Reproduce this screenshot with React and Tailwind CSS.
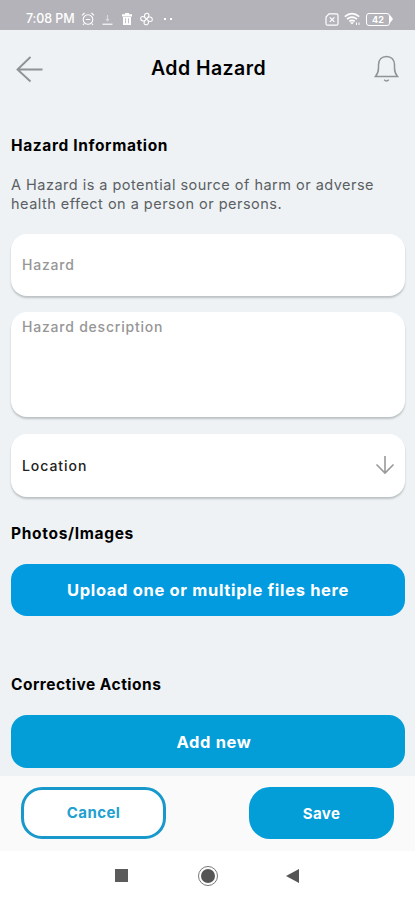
const StatusBar = () => (
  <header className="flex h-[30px] shrink-0 items-start justify-between bg-[#b4b3b9] pt-[12px] pr-[22px] pl-[26px] text-white">
    <div className="flex h-[14px] items-center">
      <span className="w-[49px] text-[12.5px] leading-[14px] font-medium tracking-[-0.1px] whitespace-nowrap">
        7:08 PM
      </span>
      {/* alarm */}
      <svg className="ml-[6px] h-[14px] w-[14px]" viewBox="0 0 14 14" fill="none" stroke="currentColor" strokeWidth="1.1">
        <circle cx="7" cy="7.5" r="4.8" />
        <path d="M1 3.4 3.6 1M13 3.4 10.4 1M3.2 11.5 2 13M10.8 11.5 12 13M4.8 7.5h4.4" />
      </svg>
      {/* download */}
      <svg className="ml-[7px] h-[14px] w-[11px]" viewBox="0 0 11 14" fill="none" stroke="currentColor" strokeWidth="1.1">
        <path d="M5.5 3v5.500M4 7.200l1.500 1.500L7 7.200" strokeOpacity=".5" />
        <path d="M.5 12.2h10" />
      </svg>
      {/* trash */}
      <svg className="ml-[8px] h-[14px] w-[12px]" viewBox="0 0 12 14" fill="currentColor">
        <path d="M4 1h4v1.2h3v2.2H1V2.200h3zM2 5h8v8H2z" />
        <path d="M4.500 6.300v5M7.500 6.300v5" stroke="#b4b3b9" strokeWidth=".8" />
      </svg>
      {/* fan */}
      <svg className="ml-[7px] h-[14px] w-[13px]" viewBox="0 0 13 14" fill="none" stroke="currentColor" strokeWidth="1.1">
        <path d="M6.500 7C3.500 5.500 4 1.200 7 1.200S9.300 5 6.500 7ZM6.500 7c1.500-3 5.800-2.500 5.800.5S8.500 9.800 6.500 7ZM6.500 7c3 1.500 2.500 5.800-.5 5.800S3.700 9 6.500 7ZM6.500 7C5 10 .7 9.500.7 6.500S4.500 4.200 6.500 7Z" />
      </svg>
      <span className="ml-[11px] flex gap-[4px]">
        <i className="h-[2px] w-[2px] bg-white" />
        <i className="h-[2px] w-[2px] bg-white" />
      </span>
    </div>
    <div className="flex h-[14px] items-center">
      {/* no sim */}
      <svg className="h-[13px] w-[14px]" viewBox="0 0 14 13" fill="none" stroke="currentColor" strokeWidth="1.2">
        <path d="M4 .8h7.500q1.500 0 1.500 1.500v8.400q0 1.500-1.500 1.500h-9Q1 12.200 1 10.700V4z" />
        <path d="m4.800 4.300 4.600 4.600M9.400 4.300 4.800 8.900" />
      </svg>
      {/* wifi */}
      <svg className="ml-[5px] h-[14px] w-[17px]" viewBox="0 0 17 14" fill="none" stroke="currentColor" strokeWidth="1.700">
        <path d="M.8 4.700Q8 -1.300 15.200 4.700M3 7.100q5-4 10 0M5.300 9.400q2.700-2.200 5.400 0" />
        <path d="m6 10.300 2 2.200 2-2.200z" fill="currentColor" stroke="none" />
        <path d="M12.500 10.500v2.500M15 10.500v2.500" strokeWidth="1" />
      </svg>
      {/* battery */}
      <div className="ml-[5px] flex items-center">
        <span className="flex h-[13px] w-[24px] items-center justify-center rounded-[3px] border-[1.5px] border-white text-[9px] leading-none font-bold">
          42
        </span>
        <svg className="h-[8px] w-[3px]" viewBox="0 0 3 8" fill="currentColor">
          <path d="M0 0l3 4-3 4z" />
        </svg>
      </div>
    </div>
  </header>
);

const App = () => {
  return (
    <div className="flex h-[900px] w-[415px] flex-col overflow-hidden bg-[#eef2f5] font-['Inter',sans-serif] text-black">
      <StatusBar />

      <div className="grid h-[78px] shrink-0 grid-cols-[1fr_auto_1fr] items-center px-[16px]">
        <svg className="h-[28px] w-[28px]" viewBox="0 0 28 28" fill="none" stroke="#909294" strokeWidth="1.9">
          <path d="M26.500 14.500H1.500M14.500 2 1.500 14.500l13 12" />
        </svg>
        <h1 className="pl-[2px] text-[19.5px] font-semibold tracking-[0.45px] whitespace-nowrap">Add Hazard</h1>
        <svg className="h-[28px] w-[26px] justify-self-end" viewBox="0 0 26 28" fill="none" stroke="#909294" strokeWidth="1.5">
          <path d="M2.500 21.500h22c-2.100-2.500-3-5-3-8.500V9.800c0-5-3-8.300-8-8.300s-8 3.300-8 8.300V13c0 3.500-.9 6-3 8.500Z" />
          <path d="M11.200 24.800q2.300 2.400 4.600 0" />
        </svg>
      </div>

      <main className="flex min-h-0 flex-1 flex-col pr-[10px] pl-[11px]">
        <h2 className="mt-[28px] text-[15.5px] leading-[20px] font-bold tracking-[0.63px] whitespace-nowrap">
          Hazard Information
        </h2>
        <p className="mt-[19px] text-[14.5px] leading-[19px] tracking-[0.48px] whitespace-nowrap text-[#5b5f63]">
          A Hazard is a potential source of harm or adverse
          <br />
          health effect on a person or persons.
        </p>

        <div className="mt-[21px] flex h-[62px] shrink-0 items-center rounded-[16px] bg-white px-[11px] pb-[2px] text-[14px] font-medium tracking-[0.78px] text-[#969696] shadow-[0_2px_2px_#bcc1c3]">
          Hazard
        </div>
        <div className="mt-[16px] h-[105px] shrink-0 rounded-[16px] bg-white px-[11px] pt-[5px] text-[14px] leading-[20px] font-medium tracking-[0.78px] text-[#969696] shadow-[0_2px_2px_#bcc1c3]">
          Hazard description
        </div>
        <div className="mt-[17px] flex h-[63px] shrink-0 items-center justify-between rounded-[16px] bg-white pr-[10px] pb-px pl-[11px] text-[14px] font-medium tracking-[0.95px] text-[#222] shadow-[0_2px_2px_#bcc1c3]">
          Location
          <svg className="h-[20px] w-[20px]" viewBox="0 0 20 20" fill="none" stroke="#999" strokeWidth="1.6">
            <path d="M10 1v17M1.500 9.500 10 18l8.500-8.500" />
          </svg>
        </div>

        <h2 className="mt-[27px] text-[15.5px] leading-[20px] font-bold tracking-[0.68px]">Photos/Images</h2>
        <button className="mt-[20px] h-[52px] shrink-0 rounded-[16px] bg-[#039be0] text-[16.5px] font-bold tracking-[0.67px] whitespace-nowrap text-white">
          Upload one or multiple files here
        </button>

        <h2 className="mt-[59px] text-[15.5px] leading-[20px] font-bold tracking-[0.49px]">Corrective Actions</h2>
        <button className="mt-[20px] h-[53px] shrink-0 rounded-[16px] bg-[#039dd8] pt-[2px] pl-[12px] text-[16.5px] font-bold tracking-[0.65px] text-white">
          Add new
        </button>
      </main>

      <footer className="flex h-[75px] shrink-0 justify-between bg-[#fafafa] pt-[11px] pr-[21px] pl-[21px]">
        <button className="h-[52px] w-[145px] rounded-[21px] border-[3px] border-[#1898cb] bg-white pt-px text-[15px] font-bold tracking-[0.4px] text-[#22a0cf]">
          Cancel
        </button>
        <button className="h-[52px] w-[145px] rounded-[21px] bg-[#039dd8] pt-[2px] text-[15px] font-bold tracking-[0.4px] text-white">
          Save
        </button>
      </footer>

      <nav className="flex h-[49px] shrink-0 items-center bg-white pl-[115px]">
        <i className="h-[13px] w-[13px] bg-[#5b5b5b]" />
        <span className="ml-[70px] flex h-[20px] w-[20px] items-center justify-center rounded-full border-[1.5px] border-[#777]">
          <i className="h-[14px] w-[14px] rounded-full bg-[#555]" />
        </span>
        <svg className="ml-[68px] h-[14px] w-[13px]" viewBox="0 0 13 14" fill="#555">
          <path d="M13 0v14L0 7z" />
        </svg>
      </nav>
    </div>
  );
};

export default App;
